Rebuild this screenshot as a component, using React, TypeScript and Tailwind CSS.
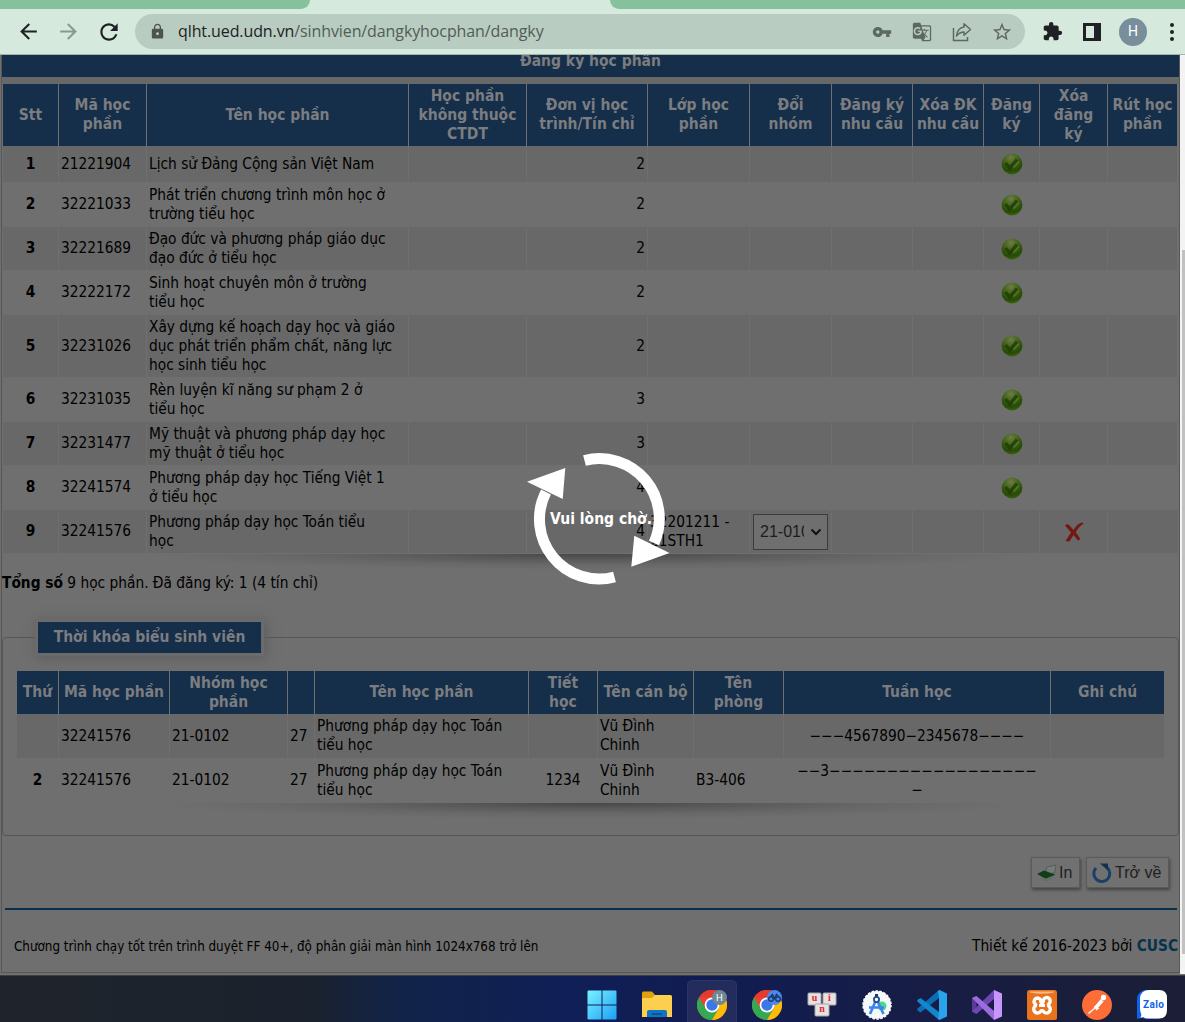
import React from "react";
import {
  MdArrowBack,
  MdArrowForward,
  MdRefresh,
  MdLock,
  MdVpnKey,
  MdGTranslate,
  MdStarBorder,
  MdExtension,
} from "react-icons/md";

const headers = [
  "Stt",
  "Mã học\nphần",
  "Tên học phần",
  "Học phần\nkhông thuộc\nCTDT",
  "Đơn vị học\ntrình/Tín chỉ",
  "Lớp học\nphần",
  "Đổi\nnhóm",
  "Đăng ký\nnhu cầu",
  "Xóa ĐK\nnhu cầu",
  "Đăng\nký",
  "Xóa\nđăng\nký",
  "Rút học\nphần",
];

const courses = [
  { code: "21221904", name: "Lịch sử Đảng Cộng sản Việt Nam", credits: 2 },
  { code: "32221033", name: "Phát triển chương trình môn học ở\ntrường tiểu học", credits: 2 },
  { code: "32221689", name: "Đạo đức và phương pháp giáo dục\nđạo đức ở tiểu học", credits: 2 },
  { code: "32222172", name: "Sinh hoạt chuyên môn ở trường\ntiểu học", credits: 2 },
  { code: "32231026", name: "Xây dựng kế hoạch dạy học và giáo\ndục phát triển phẩm chất, năng lực\nhọc sinh tiểu học", credits: 2 },
  { code: "32231035", name: "Rèn luyện kĩ năng sư phạm 2 ở\ntiểu học", credits: 3 },
  { code: "32231477", name: "Mỹ thuật và phương pháp dạy học\nmỹ thuật ở tiểu học", credits: 3 },
  { code: "32241574", name: "Phương pháp dạy học Tiếng Việt 1\nở tiểu học", credits: 4 },
  { code: "32241576", name: "Phương pháp dạy học Toán tiểu\nhọc", credits: 4, group: "32201211 -\n21STH1" },
];

const scheduleHeaders = [
  "Thứ",
  "Mã học phần",
  "Nhóm học\nphần",
  "",
  "Tên học phần",
  "Tiết\nhọc",
  "Tên cán bộ",
  "Tên\nphòng",
  "Tuần học",
  "Ghi chú",
];

const schedule = [
  { day: "", periods: "", room: "", weeks: "−−−4567890−2345678−−−−" },
  { day: "2", periods: "1234", room: "B3-406", weeks: "−−3−−−−−−−−−−−−−−−−−−\n−" },
];

function Head({ children }: { children: React.ReactNode }) {
  return (
    <div className="flex items-center justify-center whitespace-pre border-r border-[#6f6f6f] bg-[#152e49] text-center text-[15.5px] font-bold leading-[19px] text-[#7b7d80] last:border-r-0">
      {children}
    </div>
  );
}

function Cell({ shade, className = "", children }: { shade: boolean; className?: string; children?: React.ReactNode }) {
  return (
    <div
      className={`flex items-center whitespace-pre border-r border-[#6f6f6f] px-[2px] last:border-r-0 ${shade ? "bg-[#686868]" : ""} ${className}`}
    >
      {children}
    </div>
  );
}

function GreenCheck() {
  return (
    <svg width="22" height="22" viewBox="0 0 22 22">
      <defs>
        <radialGradient id="ball" cx="0.45" cy="0.2" r="0.85">
          <stop offset="0" stopColor="#6f7a4c" />
          <stop offset="0.35" stopColor="#46691a" />
          <stop offset="0.75" stopColor="#274a06" />
          <stop offset="1" stopColor="#3c6a12" />
        </radialGradient>
      </defs>
      <circle cx="11" cy="11" r="10.4" fill="url(#ball)" />
      <path d="M4.5 10l4.3 5.2L16 6.5" fill="none" stroke="#1d3a04" strokeWidth="3.4" opacity="0.75" />
      <path d="M12.5 14.5L18 8.5" fill="none" stroke="#66804a" strokeWidth="1.8" opacity="0.6" />
    </svg>
  );
}

function RedCross() {
  return (
    <svg width="20" height="20" viewBox="0 0 20 20">
      <path d="M1 3.5C3 1.5 4.500 2 6 4l3.500 4C12 4 15 .8 18.500 .5L19.500 1.500C16 4 13.500 7 11.800 10.200L16.500 17l-2.500 1.500L9.500 13 5.500 19.500 1.500 19 7 10.500Z" fill="#731812" />
    </svg>
  );
}

function TableShadow() {
  return (
    <div className="h-4 w-full overflow-hidden">
      <div className="mx-auto h-4 w-[76%] bg-[radial-gradient(ellipse_50%_100%_at_50%_0%,#474747_0%,#5a5a5a_35%,#686868_68%,#6f6f6f_100%)]" />
    </div>
  );
}

function ShareIcon() {
  return (
    <svg width="20" height="20" viewBox="0 0 20 20" fill="none" stroke="#5e6863" strokeWidth="1.5">
      <path d="M1.500 6v12.500h14V15" />
      <path d="M12 1.800l6.500 5.700-6.500 5.700V10C9 10 6.500 11.500 4.500 14 5 9.500 7.500 5.700 12 5Z" strokeLinejoin="round" />
    </svg>
  );
}

function Toolbar() {
  return (
    <div className="h-[55px] shrink-0 border-b border-[#a3b3a8] bg-[#d5eadc]">
      <div className="flex h-[9px] justify-between">
        <div className="h-[9px] w-[310px] rounded-br-[9px] bg-[#85c19b]" />
        <div className="h-[9px] w-[575px] rounded-bl-[9px] bg-[#85c19b]" />
      </div>
      <div className="flex h-[45px] items-center pl-4">
        <MdArrowBack size={25} className="shrink-0 text-[#202124]" />
        <MdArrowForward size={25} className="ml-[15px] shrink-0 text-[#8b9890]" />
        <MdRefresh size={26} className="ml-[15px] shrink-0 text-[#202124]" />
        <div className="ml-[13px] flex h-[35px] w-[890px] shrink-0 items-center rounded-full bg-[#b9ccc1] pl-[14px] pr-3">
          <MdLock size={17} className="shrink-0 text-[#4c5350]" />
          <span className="ml-[12px] flex-1 whitespace-nowrap font-['Open_Sans',sans-serif] text-[16px] tracking-[-0.1px] text-[#202124]">
            qlht.ued.udn.vn<span className="text-[#515d56]">/sinhvien/dangkyhocphan/dangky</span>
          </span>
          <MdVpnKey size={20} className="text-[#5e6863]" />
          <MdGTranslate size={20} className="ml-[20px] text-[#5e6863]" />
          <span className="ml-[20px]"><ShareIcon /></span>
          <MdStarBorder size={22} className="ml-[19px] text-[#5e6863]" />
        </div>
        <MdExtension size={21} className="ml-[17px] shrink-0 text-[#202124]" />
        <div className="ml-[20px] h-[18px] w-[18px] shrink-0 border-[3px] border-r-[7px] border-[#202124]" />
        <div className="ml-[18px] flex h-7 w-7 shrink-0 items-center justify-center rounded-full bg-[#788f9b] font-['Roboto',sans-serif] text-[14px] text-white">
          H
        </div>
        <div className="ml-[23px] flex flex-col gap-[3px]">
          <i className="h-[4px] w-[4px] rounded-full bg-[#202124]" />
          <i className="h-[4px] w-[4px] rounded-full bg-[#202124]" />
          <i className="h-[4px] w-[4px] rounded-full bg-[#202124]" />
        </div>
      </div>
    </div>
  );
}

function CourseTable() {
  return (
    <div className="ml-px w-[1175px]">
      <div className="grid grid-cols-[56px_88px_262px_118px_121px_102px_82px_81px_71px_56px_68px_70px] grid-rows-[62px_36px_45px_43px_45px_62px_45px_43px_45px_43px]">
        {headers.map((h) => (
          <Head key={h}>{h}</Head>
        ))}
        {courses.map((c, i) => {
          const s = i % 2 === 0;
          return (
            <React.Fragment key={c.code}>
              <Cell shade={s} className="justify-center font-bold">{i + 1}</Cell>
              <Cell shade={s}>{c.code}</Cell>
              <Cell shade={s}>{c.name}</Cell>
              <Cell shade={s} />
              <Cell shade={s} className="justify-end">{c.credits}</Cell>
              <Cell shade={s}>{c.group}</Cell>
              <Cell shade={s}>
                {c.group && (
                  <div className="ml-px flex h-9 w-[75px] items-center border border-[#3b3b3b] bg-[#6f6f6f] pl-[6px]">
                    <span className="w-[44px] overflow-hidden font-['Liberation_Sans',sans-serif] text-[16px] text-[#1c1c1c]">21-0102</span>
                    <svg width="12" height="8" viewBox="0 0 12 8" className="ml-[6px]">
                      <path d="M1.500 1.500L6 6l4.500-4.500" fill="none" stroke="#111" strokeWidth="2" />
                    </svg>
                  </div>
                )}
              </Cell>
              <Cell shade={s} />
              <Cell shade={s} />
              <Cell shade={s} className="justify-center">{!c.group && <GreenCheck />}</Cell>
              <Cell shade={s} className="justify-center">{c.group && <RedCross />}</Cell>
              <Cell shade={s} />
            </React.Fragment>
          );
        })}
      </div>
      <div className="h-px" />
      <TableShadow />
    </div>
  );
}

function ScheduleTable() {
  return (
    <div className="ml-[14px] w-[1148px]">
      <div className="grid grid-cols-[42px_111px_118px_27px_214px_69px_96px_90px_267px_114px] grid-rows-[43px_44px_45px]">
        {scheduleHeaders.map((h, i) => (
          <Head key={i}>{h}</Head>
        ))}
        {schedule.map((r, i) => {
          const s = i === 0;
          return (
            <React.Fragment key={i}>
              <Cell shade={s} className="justify-center font-bold">{r.day}</Cell>
              <Cell shade={s}>32241576</Cell>
              <Cell shade={s}>21-0102</Cell>
              <Cell shade={s}>27</Cell>
              <Cell shade={s}>{"Phương pháp dạy học Toán\ntiểu học"}</Cell>
              <Cell shade={s} className="justify-center">{r.periods}</Cell>
              <Cell shade={s}>{"Vũ Đình\nChinh"}</Cell>
              <Cell shade={s}>{r.room}</Cell>
              <Cell shade={s} className="justify-center text-center">{r.weeks}</Cell>
              <Cell shade={s} />
            </React.Fragment>
          );
        })}
      </div>
      <TableShadow />
    </div>
  );
}

function Spinner() {
  return (
    <div className="absolute left-[517px] top-[389px] flex h-[150px] w-[160px] items-center justify-center">
      <svg width="160" height="150" viewBox="517 444 160 150" className="absolute inset-0">
        <g fill="none" stroke="#fff" strokeWidth="11">
          <path d="M582.500 460.500A59.800 59.800 0 0 1 652 543" />
          <path d="M612.500 577A59.800 59.800 0 0 1 544 492" />
        </g>
        <path d="M667.500 553L629.300 566.700 632.300 535.700ZM525 481.700L563.300 468 560.700 499Z" fill="#fff" />
      </svg>
      <span className="relative left-[2px] whitespace-nowrap text-[15.5px] font-bold text-white">Vui lòng chờ.</span>
    </div>
  );
}

function Chrome({ children }: { children: React.ReactNode }) {
  return (
    <svg width="30" height="30" viewBox="0 0 30 30">
      <circle cx="15" cy="15" r="15" fill="#ea4335" />
      <path d="M2 7.500A15 15 0 0 0 15 30L21.500 18.700 15 15 8.500 18.700Z" fill="#34a853" />
      <path d="M28 7.500A15 15 0 0 1 15 30L21.500 18.700V7.500Z" fill="#fbbc05" />
      <path d="M2 7.500A15 15 0 0 1 28 7.500H15Z" fill="#e33b2e" />
      <circle cx="15" cy="15" r="7.400" fill="#fff" />
      <circle cx="15" cy="15" r="5.700" fill="#3b78e7" />
      {children}
    </svg>
  );
}

function Taskbar() {
  return (
    <div className="flex h-[47px] shrink-0 items-end border-t border-[#3b3f48] bg-[linear-gradient(90deg,#1f242c_0%,#1b222d_26%,#112349_34%,#101f57_48%,#111c50_62%,#171d45_78%,#1b1e35_100%)] pl-[574px]">
      <div className="flex">
        {/* Start */}
        <div className="flex h-[42px] w-[55px] justify-center pt-[10px]">
          <svg width="30" height="30" viewBox="0 0 30 30">
            <defs>
              <linearGradient id="win" x1="0" y1="0" x2="1" y2="1">
                <stop offset="0" stopColor="#7af2ff" />
                <stop offset="1" stopColor="#1aa0f5" />
              </linearGradient>
            </defs>
            <path d="M.5 1.500q0-1 1-1H14.500V14.500H.5ZM15.500 .5H28.500q1 0 1 1V14.500H15.500ZM.5 15.500H14.500V29.500H1.500q-1 0-1-1ZM15.500 15.500H29.500V28.500q0 1-1 1H15.500Z" fill="url(#win)" />
          </svg>
        </div>
        {/* File manager */}
        <div className="flex h-[42px] w-[55px] justify-center pt-[10px]">
          <svg width="30" height="30" viewBox="0 0 30 30">
            <path d="M0 3q0-1.500 1.500-1.500H10L13 5v6H0Z" fill="#dfa10c" />
            <path d="M0 8H10L13 5H28.500Q30 5 30 6.500V27H0Z" fill="#fdcf4e" />
            <path d="M5 27V22q0-2 2-2H23q2 0 2 2v5Z" fill="#0f74c4" />
            <path d="M10 24H20" stroke="#0a4b87" strokeWidth="1.500" />
          </svg>
        </div>
        {/* Browser, active window */}
        <div className="flex h-[42px] w-[55px] justify-center">
          <div className="flex w-[50px] justify-center rounded-t-[5px] border border-b-0 border-[#2b3561] bg-[#232c5c] pt-[9px]">
            <Chrome>
              <circle cx="22.500" cy="7.500" r="7.500" fill="#6f8792" />
              <text x="22.500" y="11" textAnchor="middle" fontSize="9.500" fill="#fff" fontFamily="Roboto, sans-serif">H</text>
            </Chrome>
          </div>
        </div>
        <div className="flex h-[42px] w-[55px] justify-center pt-[10px]">
          <Chrome>
            <circle cx="22.500" cy="7.500" r="7.500" fill="#4a88f0" />
            <g fill="none" stroke="#173a66" strokeWidth="1.400">
              <circle cx="19" cy="9" r="2.300" />
              <circle cx="26" cy="9" r="2.300" />
              <path d="M18.500 6.500l2-2 2 4 2-4 2 2" />
            </g>
          </Chrome>
        </div>
        {/* Keyboard layout tool */}
        <div className="flex h-[42px] w-[55px] justify-center pt-[10px]">
          <svg width="30" height="30" viewBox="0 0 30 30">
            <g fill="#e6e2e2" stroke="#a9a6a8" strokeWidth="1">
              <rect x="1" y="3" width="13" height="12" rx="1" />
              <rect x="16" y="3" width="13" height="12" rx="1" />
              <rect x="8" y="14" width="14" height="12" rx="1" />
            </g>
            <g fill="#e3262b" fontFamily="Liberation Serif, serif" fontWeight="bold" fontSize="10" textAnchor="middle">
              <text x="7.500" y="11">u</text>
              <text x="22.500" y="11">i</text>
              <text x="15" y="22">n</text>
            </g>
          </svg>
        </div>
        {/* Android IDE */}
        <div className="flex h-[42px] w-[55px] justify-center pt-[10px]">
          <svg width="30" height="30" viewBox="0 0 30 30">
            <circle cx="15" cy="15" r="14" fill="#f5f8fb" stroke="#f5f8fb" strokeWidth="1.500" strokeDasharray="2.500 1.500" />
            <circle cx="20" cy="16" r="4.500" fill="#4bd98a" />
            <g fill="none" stroke="#3d83ef" strokeWidth="2.600">
              <path d="M14.500 9L8 24M14.500 9L21.500 24M7 17.500H22" />
            </g>
            <path d="M14.500 4V8" stroke="#1f3a56" strokeWidth="3" />
            <circle cx="14.500" cy="9.500" r="2.600" fill="#fff" stroke="#1f4c86" strokeWidth="1.800" />
          </svg>
        </div>
        {/* Code editor */}
        <div className="flex h-[42px] w-[55px] justify-center pt-[10px]">
          <svg width="30" height="30" viewBox="0 0 30 30">
            <path d="M22 0V8L3.500 22.500 .3 20.500V18.800Z" fill="#0a6db5" />
            <path d="M22 30V22L3.500 8 .3 10V11.500Z" fill="#1486d0" />
            <path d="M21 .8L22.500 0 30 3.500V26.500L22.500 30 21 29 22 22V8Z" fill="#2ba3ea" />
          </svg>
        </div>
        {/* IDE */}
        <div className="flex h-[42px] w-[55px] justify-center pt-[10px]">
          <svg width="30" height="30" viewBox="0 0 30 30">
            <path d="M0 8L4.500 6V24L0 21.500Z" fill="#5a3a94" />
            <path d="M0 21.500L22 0V9L4.500 24Z" fill="#6f46b5" />
            <path d="M0 8L4.500 6 22 21V30Z" fill="#9b6be0" />
            <path d="M22 0L30 3.500V26.500L22 30Z" fill="#c796fb" />
          </svg>
        </div>
        {/* Local server panel */}
        <div className="flex h-[42px] w-[55px] justify-center pt-[10px]">
          <svg width="30" height="30" viewBox="0 0 30 30">
            <rect width="30" height="30" rx="2.500" fill="#e9731d" />
            <path d="M3 2.500Q15 5 27 2.500V1.500H3Z" fill="#f8b98a" />
            <path d="M10.500 8a3.500 3.500 0 0 0-3 5.200 2 2 0 0 1 0 3.600 3.500 3.500 0 0 0 6 4.700 2 2 0 0 1 3 0 3.500 3.500 0 0 0 6-4.700 2 2 0 0 1 0-3.600 3.500 3.500 0 1 0-6-3.500Q16.500 12.500 15 12.500T13.500 9.700A3.500 3.500 0 0 0 10.500 8Z" fill="none" stroke="#fff" strokeWidth="3.400" strokeLinejoin="round" />
            <path d="M12 15.500H18" stroke="#fff" strokeWidth="3" />
          </svg>
        </div>
        {/* API client */}
        <div className="flex h-[42px] w-[55px] justify-center pt-[10px]">
          <svg width="30" height="30" viewBox="0 0 30 30">
            <circle cx="15" cy="15" r="15" fill="#fe6c37" />
            <circle cx="21.500" cy="7.500" r="2.700" fill="#fff" />
            <path d="M19 9.500L21 11.500 15.500 18 13.500 18.500 12.500 17Z" fill="#fff" stroke="#fff" />
            <path d="M13.500 17.500L6.500 23.500M12 17L16 18.500 14 20" stroke="#fff" strokeWidth="1.300" fill="none" />
          </svg>
        </div>
        {/* Messenger */}
        <div className="flex h-[42px] w-[55px] justify-center pt-[10px]">
          <svg width="30" height="30" viewBox="0 0 30 30">
            <rect width="29" height="29" rx="9" fill="#0f62ea" />
            <path d="M0 20V29L7 27Z" fill="#0f62ea" />
            <path d="M12 0H22Q30 0 30 8V20Q30 28.500 22 28.500H12Q8 28.500 6 27L3 28Q5 26 4 23.500 3 21 3 18V8Q4 0 12 0Z" fill="#fff" />
            <text x="16.500" y="17.500" textAnchor="middle" fontSize="10" fontWeight="bold" fill="#0f62ea" fontFamily="Roboto, sans-serif" textLength="21">Zalo</text>
          </svg>
        </div>
      </div>
    </div>
  );
}

export default function App() {
  return (
    <div className="flex h-[1022px] w-[1185px] flex-col overflow-hidden bg-[#6f6f6f] font-['DejaVu_Sans_Condensed','DejaVu_Sans',sans-serif] text-[15.3px] leading-[19px] text-black">
      <Toolbar />
      <div className="flex h-[920px] shrink-0">
        <div className="relative h-[918px] w-[1179px] shrink-0 border-b border-l border-r border-[#575757] ml-px">
          <div className="flex h-[22px] justify-center overflow-hidden bg-[#152e49] text-[15.5px] font-bold text-[#7b7d80]">
            <span className="-mt-[3px]">Đăng ký học phần</span>
          </div>
          <div className="h-[7px] bg-[#686868]" />
          <CourseTable />
          <div className="mt-[4px]">
            <b>Tổng số</b> 9 học phần. Đã đăng ký: 1 (4 tín chỉ)
          </div>
          <div className="mt-[29px] flex h-[31px]">
            <div className="z-10 ml-[36px] flex w-[223px] items-center justify-center bg-[#152e49] text-[15.5px] font-bold text-[#7b7d80] shadow-[0_0_0_3px_#6b6b6b,2px_2px_10px_4px_#606060]">
              Thời khóa biểu sinh viên
            </div>
          </div>
          <div className="-mt-[16px] h-[199px] w-[1177px] rounded-[4px] border border-[#565656] pt-[33px]">
            <ScheduleTable />
          </div>
          <div className="mt-[21px] flex h-[31px] justify-end gap-[6px] pr-[10px] font-['Liberation_Sans',sans-serif] text-[16px] text-[#1f1f1f]">
            <div className="flex w-[49px] items-center border border-[#5a5a5a] bg-[#717171] pl-[4px] shadow-[1px_2px_3px_#444]">
              <svg width="21" height="18" viewBox="0 0 21 18">
                <path d="M11 3L20 1 18.500 9 9 10Z" fill="#777c79" stroke="#4f5f55" />
                <path d="M1 10L8 6.500 19 10.500 12 16Z" fill="#123c1c" />
                <path d="M4 13L10 14.500 17 11.500 16 15 9 17.500Z" fill="#5f7263" />
              </svg>
              <span className="ml-[2px]">In</span>
            </div>
            <div className="flex w-[83px] items-center border border-[#5a5a5a] bg-[#717171] pl-[5px] shadow-[1px_2px_3px_#444]">
              <svg width="20" height="20" viewBox="0 0 20 20">
                <path d="M4 5A8 8 0 1 0 15 4.500" fill="none" stroke="#1b3f66" strokeWidth="3" />
                <path d="M8 .5L16 .5 16 7.500Z" fill="#14314f" />
              </svg>
              <span className="ml-[3px]">Trở về</span>
            </div>
          </div>
          <div className="ml-[3px] mt-[20px] h-[2px] w-[1172px] bg-[#06324c]" />
          <div className="mt-[27px] flex items-center justify-between pl-[12px] pr-px">
            <span className="text-[13.300px]">Chương trình chạy tốt trên trình duyệt FF 40+, độ phân giải màn hình 1024x768 trở lên</span>
            <span>
              Thiết kế 2016-2023 bởi <b className="text-[#06324c]">CUSC</b>
            </span>
          </div>
          <Spinner />
        </div>
        <div className="h-[919px] flex-1 bg-[#f3f3f3] pl-[2px] pt-[195px]">
          <div className="h-[704px] bg-[#c1c1c1]" />
        </div>
      </div>
      <Taskbar />
    </div>
  );
}
